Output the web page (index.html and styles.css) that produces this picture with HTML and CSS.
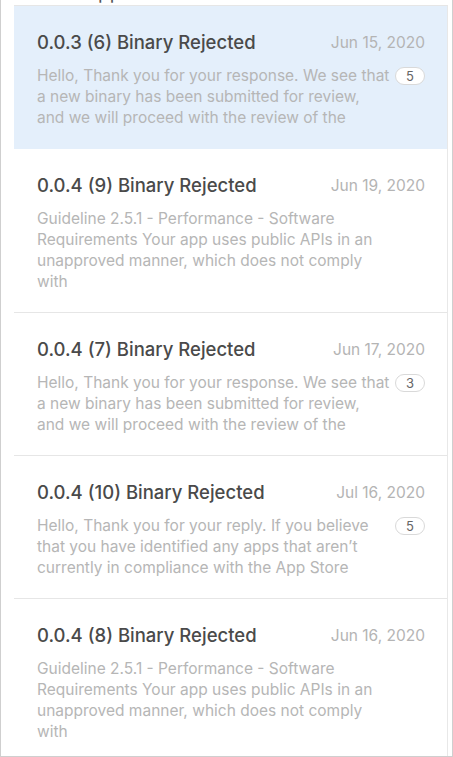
FILE: index.html
```html
<!DOCTYPE html>
<html lang="en">
<head>
    <meta charset="UTF-8">
    <meta name="viewport" content="width=device-width, initial-scale=1.0">
    <title>Resolution Center</title>
    <link rel="stylesheet" href="styles.css">
</head>
<body>
    <div class="frame">
        <div class="top"><span>Apps</span></div>

        <div class="list">
            <div class="item active">
                <div class="item-head">
                    <span class="title">0.0.3 (6) Binary Rejected</span>
                    <span class="date">Jun 15, 2020</span>
                </div>
                <div class="item-body">
                    <p class="preview">Hello, Thank you for your response. We see that a new binary has been submitted for review, and we will proceed with the review of the</p>
                    <span class="badge">5</span>
                </div>
            </div>

            <div class="item">
                <div class="item-head">
                    <span class="title">0.0.4 (9) Binary Rejected</span>
                    <span class="date">Jun 19, 2020</span>
                </div>
                <div class="item-body">
                    <p class="preview">Guideline 2.5.1 - Performance - Software Requirements Your app uses public APIs in an unapproved manner, which does not comply with</p>
                </div>
            </div>

            <div class="item">
                <div class="item-head">
                    <span class="title">0.0.4 (7) Binary Rejected</span>
                    <span class="date">Jun 17, 2020</span>
                </div>
                <div class="item-body">
                    <p class="preview">Hello, Thank you for your response. We see that a new binary has been submitted for review, and we will proceed with the review of the</p>
                    <span class="badge">3</span>
                </div>
            </div>

            <div class="item">
                <div class="item-head">
                    <span class="title">0.0.4 (10) Binary Rejected</span>
                    <span class="date">Jul 16, 2020</span>
                </div>
                <div class="item-body">
                    <p class="preview">Hello, Thank you for your reply. If you believe that you have identified any apps that aren’t currently in compliance with the App Store</p>
                    <span class="badge">5</span>
                </div>
            </div>

            <div class="item">
                <div class="item-head">
                    <span class="title">0.0.4 (8) Binary Rejected</span>
                    <span class="date">Jun 16, 2020</span>
                </div>
                <div class="item-body">
                    <p class="preview">Guideline 2.5.1 - Performance - Software Requirements Your app uses public APIs in an unapproved manner, which does not comply with</p>
                </div>
            </div>
        </div>
    </div>
</body>
</html>
```

FILE: styles.css
```css
html, body {
    margin: 0;
    height: 100%;
}
body {
    font-family: Inter, "Noto Sans", sans-serif;
    background-color: white;
    overflow: hidden;
}
.frame {
    height: 757px;
    box-sizing: border-box;
    border-left: 1px solid #cfcfcf;
    border-right: 1px solid #cfcfcf;
    border-bottom: 1px solid #cfcfcf;
    overflow: hidden;
}
.top {
    height: 5px;
    overflow: hidden;
    display: flex;
    align-items: flex-end;
    padding-left: 84px;
}
.top span {
    font-size: 19px;
    line-height: 19px;
    color: #555;
    margin-bottom: 3px;
}
.list {
    margin-left: 13px;
    width: 433px;
    border-top: 1px solid #e6e6e6;
    border-right: 1px solid #e8e8e8;
}
.item {
    padding: 24px 22px 20px 23px;
    border-bottom: 1px solid #e6e6e6;
}
.item.active {
    background-color: #e4effb;
    border-bottom-color: #e4effb;
}
.item-head {
    display: flex;
    justify-content: space-between;
    align-items: center;
    height: 24px;
}
.title {
    font-size: 18.5px;
    font-weight: 500;
    color: #4a4a4a;
}
.date {
    font-size: 15.5px;
    color: #b4b4b4;
}
.item-body {
    display: flex;
    align-items: flex-start;
    justify-content: space-between;
    margin-top: 11px;
}
.preview {
    margin: 0;
    width: 354px;
    font-size: 15.5px;
    line-height: 21px;
    color: #b6b6b6;
}
.badge {
    margin-top: 2px;
    min-width: 30px;
    height: 18px;
    box-sizing: border-box;
    border: 1px solid #d9d9d9;
    border-radius: 9px;
    background-color: white;
    font-size: 13px;
    line-height: 16px;
    text-align: center;
    color: #666;
}
```
